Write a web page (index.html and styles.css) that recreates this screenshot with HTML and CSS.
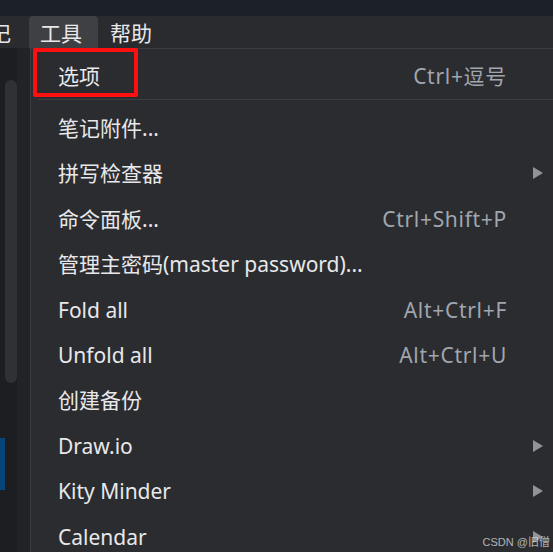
FILE: index.html
```html
<!DOCTYPE html>
<html lang="zh-CN">
<head>
<meta charset="utf-8">
<title>工具菜单</title>
<link rel="stylesheet" href="styles.css">
</head>
<body>
<div class="app">
  <div class="topstrip"></div>
  <div class="menubar">
    <div class="mb-item mb-first">笔记</div>
    <div class="mb-item mb-active">工具</div>
    <div class="mb-item">帮助</div>
  </div>
  <div class="main">
    <div class="sidebar">
      <div class="sb-col sb-left">
        <div class="sb-blue"></div>
      </div>
      <div class="sb-col sb-right"></div>
      <div class="sb-thumb"></div>
    </div>
    <div class="menu">
      <div class="row"><span class="label">选项</span><span class="key">Ctrl+逗号</span><span class="sub"></span></div>
      <div class="sep"></div>
      <div class="row"><span class="label">笔记附件...</span><span class="key"></span><span class="sub"></span></div>
      <div class="row"><span class="label">拼写检查器</span><span class="key"></span><span class="sub"><i class="arrow"></i></span></div>
      <div class="row"><span class="label">命令面板...</span><span class="key">Ctrl+Shift+P</span><span class="sub"></span></div>
      <div class="row"><span class="label">管理主密码(master password)...</span><span class="key"></span><span class="sub"></span></div>
      <div class="row"><span class="label">Fold all</span><span class="key">Alt+Ctrl+F</span><span class="sub"></span></div>
      <div class="row"><span class="label">Unfold all</span><span class="key">Alt+Ctrl+U</span><span class="sub"></span></div>
      <div class="row"><span class="label">创建备份</span><span class="key"></span><span class="sub"></span></div>
      <div class="row"><span class="label">Draw.io</span><span class="key"></span><span class="sub"><i class="arrow"></i></span></div>
      <div class="row"><span class="label">Kity Minder</span><span class="key"></span><span class="sub"><i class="arrow"></i></span></div>
      <div class="row"><span class="label">Calendar</span><span class="key"></span><span class="sub"><i class="arrow"></i></span></div>
    </div>
  </div>
  <div class="highlight"></div>
  <div class="watermark">CSDN @旧僧</div>
</div>
</body>
</html>
```
FILE: styles.css
```css
* { box-sizing: border-box; }
html, body {
  margin: 0;
  padding: 0;
  background: #2b2c30;
}
.app {
  position: relative;
  width: 553px;
  height: 552px;
  overflow: hidden;
  font-family: "Noto Sans", "Noto Sans CJK SC", sans-serif;
  color: #e8e8ea;
  display: flex;
  flex-direction: column;
}
.topstrip {
  height: 16px;
  background: #1c2029;
  flex: none;
}
.menubar {
  height: 32px;
  flex: none;
  background: #2a2b2f;
  display: flex;
  align-items: stretch;
  font-size: 21px;
}
.mb-item {
  display: flex;
  align-items: center;
  padding: 3px 12px 0 12px;
  line-height: 1;
  white-space: nowrap;
}
.mb-first {
  margin-left: -43px;
  padding-right: 18px;
}
.mb-active {
  background: #3f4044;
  border-radius: 4px 4px 0 0;
  padding-left: 11px;
  padding-right: 16px;
}
.main {
  flex: 1;
  display: flex;
  min-height: 0;
}
.sidebar {
  position: relative;
  width: 30px;
  flex: none;
  display: flex;
}
.sb-col { height: 100%; }
.sb-left {
  width: 17px;
  background: #1d1e22;
  padding-top: 390px;
}
.sb-right {
  width: 13px;
  background: #222327;
}
.sb-blue {
  width: 5px;
  height: 52px;
  background: #064479;
}
.sb-thumb {
  position: absolute;
  left: 5px;
  top: 32px;
  width: 12px;
  height: 303px;
  border-radius: 6px;
  background: #303135;
}
.menu {
  flex: 1;
  background: #2b2c30;
  border-left: 1px solid #3b3c40;
  border-top: 1px solid #3d3e42;
  padding-top: 4px;
  font-size: 21px;
}
.row {
  height: 45.4px;
  display: grid;
  grid-template-columns: 1fr auto 46px;
  align-items: center;
  padding-left: 27px;
  white-space: nowrap;
}
.label {
  line-height: 1;
  padding-top: 1px;
}
.key {
  color: #a0a6ae;
  line-height: 1;
  padding-top: 1px;
  letter-spacing: 0.7px;
}
.sub {
  display: flex;
  align-items: center;
  padding-left: 26px;
}
.arrow {
  display: block;
  width: 0;
  height: 0;
  border-top: 6.5px solid transparent;
  border-bottom: 6.5px solid transparent;
  border-left: 10px solid #909399;
}
.sep {
  height: 1px;
  background: #3d3e42;
  margin: 1px 0 5px 7px;
}
.highlight {
  position: absolute;
  left: 33px;
  top: 48px;
  width: 105px;
  height: 49px;
  border: 4px solid #ff1010;
  border-radius: 2px;
}
.watermark {
  position: absolute;
  right: 3px;
  bottom: 4px;
  font-family: "Liberation Sans", "Noto Sans CJK SC", sans-serif;
  font-size: 11px;
  line-height: 1;
  color: rgba(225, 225, 225, 0.75);
}
```
